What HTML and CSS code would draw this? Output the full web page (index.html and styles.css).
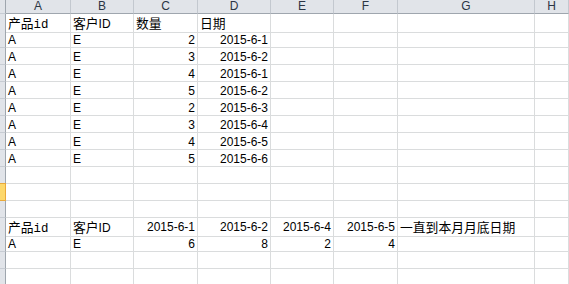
FILE: index.html
```html
<!DOCTYPE html>
<html>
<head>
<meta charset="utf-8">
<link rel="stylesheet" href="styles.css">
</head>
<body>
<div class="sheet">
  <div class="row hdr">
    <div class="rh"></div><div class="ch">A</div><div class="ch">B</div><div class="ch">C</div><div class="ch">D</div><div class="ch">E</div><div class="ch">F</div><div class="ch">G</div><div class="ch">H</div>
  </div>
  <div class="row">
    <div class="rh"></div><div class="c"><span class="cjk">产品</span><span class="mono">id</span></div><div class="c"><span class="cjk">客户</span>ID</div><div class="c"><span class="cjk">数量</span></div><div class="c"><span class="cjk">日期</span></div><div class="c"></div><div class="c"></div><div class="c"></div><div class="c"></div>
  </div>
  <div class="row"><div class="rh"></div><div class="c">A</div><div class="c">E</div><div class="c r">2</div><div class="c r">2015-6-1</div><div class="c"></div><div class="c"></div><div class="c"></div><div class="c"></div></div>
  <div class="row"><div class="rh"></div><div class="c">A</div><div class="c">E</div><div class="c r">3</div><div class="c r">2015-6-2</div><div class="c"></div><div class="c"></div><div class="c"></div><div class="c"></div></div>
  <div class="row"><div class="rh"></div><div class="c">A</div><div class="c">E</div><div class="c r">4</div><div class="c r">2015-6-1</div><div class="c"></div><div class="c"></div><div class="c"></div><div class="c"></div></div>
  <div class="row"><div class="rh"></div><div class="c">A</div><div class="c">E</div><div class="c r">5</div><div class="c r">2015-6-2</div><div class="c"></div><div class="c"></div><div class="c"></div><div class="c"></div></div>
  <div class="row"><div class="rh"></div><div class="c">A</div><div class="c">E</div><div class="c r">2</div><div class="c r">2015-6-3</div><div class="c"></div><div class="c"></div><div class="c"></div><div class="c"></div></div>
  <div class="row"><div class="rh"></div><div class="c">A</div><div class="c">E</div><div class="c r">3</div><div class="c r">2015-6-4</div><div class="c"></div><div class="c"></div><div class="c"></div><div class="c"></div></div>
  <div class="row"><div class="rh"></div><div class="c">A</div><div class="c">E</div><div class="c r">4</div><div class="c r">2015-6-5</div><div class="c"></div><div class="c"></div><div class="c"></div><div class="c"></div></div>
  <div class="row"><div class="rh"></div><div class="c">A</div><div class="c">E</div><div class="c r">5</div><div class="c r">2015-6-6</div><div class="c"></div><div class="c"></div><div class="c"></div><div class="c"></div></div>
  <div class="row"><div class="rh"></div><div class="c"></div><div class="c"></div><div class="c"></div><div class="c"></div><div class="c"></div><div class="c"></div><div class="c"></div><div class="c"></div></div>
  <div class="row"><div class="rh active"></div><div class="c"></div><div class="c"></div><div class="c"></div><div class="c"></div><div class="c"></div><div class="c"></div><div class="c"></div><div class="c"></div></div>
  <div class="row"><div class="rh"></div><div class="c"></div><div class="c"></div><div class="c"></div><div class="c"></div><div class="c"></div><div class="c"></div><div class="c"></div><div class="c"></div></div>
  <div class="row">
    <div class="rh"></div><div class="c"><span class="cjk">产品</span><span class="mono">id</span></div><div class="c"><span class="cjk">客户</span>ID</div><div class="c r">2015-6-1</div><div class="c r">2015-6-2</div><div class="c r">2015-6-4</div><div class="c r">2015-6-5</div><div class="c"><span class="cjk">一直到本月月底日期</span></div><div class="c"></div>
  </div>
  <div class="row"><div class="rh"></div><div class="c">A</div><div class="c">E</div><div class="c r">6</div><div class="c r">8</div><div class="c r">2</div><div class="c r">4</div><div class="c"></div><div class="c"></div></div>
  <div class="row"><div class="rh"></div><div class="c"></div><div class="c"></div><div class="c"></div><div class="c"></div><div class="c"></div><div class="c"></div><div class="c"></div><div class="c"></div></div>
  <div class="row"><div class="rh"></div><div class="c"></div><div class="c"></div><div class="c"></div><div class="c"></div><div class="c"></div><div class="c"></div><div class="c"></div><div class="c"></div></div>
</div>
</body>
</html>
```
FILE: styles.css
```css
* { box-sizing: border-box; }
html, body { margin: 0; padding: 0; background: #fff; overflow: hidden; }
body { width: 569px; height: 284px; }
.sheet {
  font-family: "Liberation Sans", "Noto Sans CJK SC", sans-serif;
  font-size: 12px;
  color: #000;
}
.row {
  display: grid;
  grid-template-columns: 6px 65px 63px 64px 73px 63px 64px 137px 1fr;
  height: 17px;
}
.row.hdr { height: 14px; }
.rh {
  background: #e1e4e9;
  border-right: 1px solid #9fa6ae;
  border-bottom: 1px solid #c7ccd3;
}
.rh.active {
  background: #fdd86b;
  border-right: 1px solid #e9a93a;
  border-bottom: 1px solid #e9a93a;
  border-top: 1px solid #e9a93a;
  margin-top: -1px;
  height: 18px;
}
.ch {
  background: #e1e4e9;
  border-right: 1px solid #c3c8cf;
  border-bottom: 1px solid #9fa6ae;
  text-align: center;
  line-height: 13px;
  color: #2b3544;
}
.c {
  border-right: 1px solid #dadcdd;
  border-bottom: 1px solid #dadcdd;
  padding: 2px 2px 0 2px;
  line-height: 14px;
  white-space: nowrap;
  overflow: visible;
}
.c.r { text-align: right; }
.mono { font-family: "Liberation Mono", monospace; font-size: 12.4px; }
.cjk { font-family: "Noto Sans CJK SC", sans-serif; font-size: 12.8px; }
```
